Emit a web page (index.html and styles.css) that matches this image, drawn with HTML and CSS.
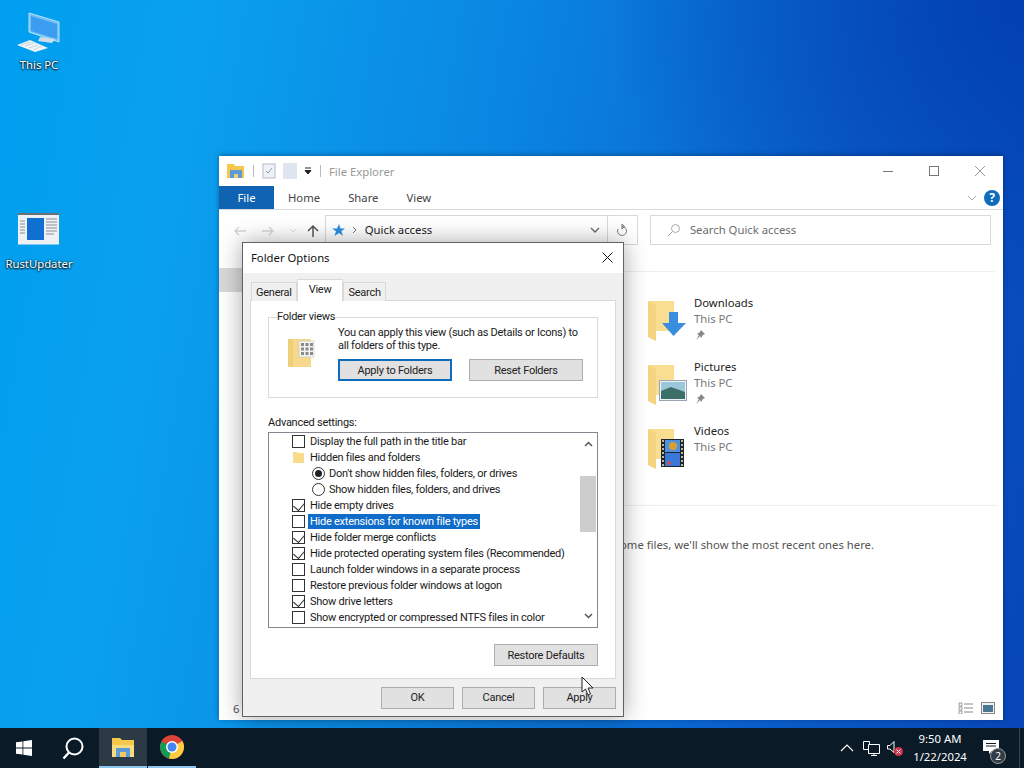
FILE: index.html
```html
<!DOCTYPE html>
<html lang="en">
<head>
  <meta charset="UTF-8" />
  <title>Folder Options</title>
  <link rel="stylesheet" href="styles.css">
</head>
<body>

<div class="desktop">

  <!-- desktop icons -->
  <div class="desk-icon icon-pc">
    <svg width="48" height="44" viewBox="0 0 48 44">
      <path d="M14 3 L44 12 V32 L14 22 Z" fill="#6fc0f4" stroke="#b9e0fa" stroke-width="1"/>
      <path d="M16 6 L42 14 V29 L16 21 Z" fill="#3a9df0"/>
      <path d="M25 27 L40 29 L37 33 L23 31 Z" fill="#cfdde8"/>
      <path d="M2 35 L15 30 L33 38 L20 42 Z" fill="#eef4f8"/>
      <path d="M6 35L15 32M10 36L19 33M14 38L23 35M18 40L27 36" stroke="#b8c6d2" stroke-width=".7"/>
    </svg>
    <span>This PC</span>
  </div>
  <div class="desk-icon icon-rust">
    <svg width="44" height="32" viewBox="0 0 44 32">
      <rect width="41" height="31" x="1" y="0.5" fill="#eef1f4"/>
      <rect x="1" y="0" width="41" height="2" fill="#6a6f78"/>
      <rect x="10" y="5" width="17" height="22" fill="#0f70d2"/>
      <path d="M3 8h5M3 11h5M3 14h5M3 17h5M3 20h5" stroke="#8a8f98" stroke-width="1"/>
      <path d="M29 6h11M29 9h11M29 12h11M29 15h11M29 18h11M29 21h8" stroke="#8a8f98" stroke-width="1"/>
    </svg>
    <span>RustUpdater</span>
  </div>

  <!-- explorer window -->
  <div class="explorer">
    <div class="ex-title">
      <svg width="18" height="16" viewBox="0 0 18 16">
        <path d="M0 1h7l1 2h9v12H0z" fill="#f5c84c"/>
        <path d="M3 7h12v8H3z" fill="#5a9bd8"/>
        <path d="M7 11h4v4H7z" fill="#f2d16a"/>
      </svg>
      <span class="sep"></span>
      <svg width="14" height="16" viewBox="0 0 14 16">
        <rect x="1" y="1" width="12" height="14" fill="#eef2f6" stroke="#b4bcc6"/>
        <path d="M4 8l2 2 4-5" stroke="#8aa0b8" fill="none"/>
      </svg>
      <svg class="ml" width="14" height="16" viewBox="0 0 14 16">
        <rect width="14" height="16" fill="#dfe6ef"/>
      </svg>
      <svg class="ml" width="8" height="8" viewBox="0 0 8 8">
        <path d="M1 1h6M1 3.500h6L4 7z" stroke="#222" stroke-width="1" fill="#222"/>
      </svg>
      <span class="sep"></span>
      <span class="ex-name">File Explorer</span>
      <div class="caption">
        <svg width="12" height="12" viewBox="0 0 12 12"><path d="M1 6.500h10" stroke="#777"/></svg>
        <svg width="12" height="12" viewBox="0 0 12 12"><rect x="1.500" y="1.500" width="9" height="9" fill="none" stroke="#777"/></svg>
        <svg width="12" height="12" viewBox="0 0 12 12"><path d="M1 1l10 10M11 1L1 11" stroke="#999"/></svg>
      </div>
    </div>

    <div class="ribbon">
      <div class="rib-file">File</div>
      <div class="rib-tab">Home</div>
      <div class="rib-tab">Share</div>
      <div class="rib-tab">View</div>
      <svg class="rib-chev" width="10" height="6" viewBox="0 0 10 6"><path d="M1 1l4 4 4-4" stroke="#aaa" fill="none"/></svg>
      <div class="help">?</div>
    </div>

    <div class="addr-row">
      <div class="nav-btns">
        <svg width="14" height="12" viewBox="0 0 14 12"><path d="M13 6H2M6 2L2 6l4 4" stroke="#d5d5d5" stroke-width="1.400" fill="none"/></svg>
        <svg width="14" height="12" viewBox="0 0 14 12"><path d="M1 6h11M8 2l4 4-4 4" stroke="#d5d5d5" stroke-width="1.400" fill="none"/></svg>
        <svg width="8" height="6" viewBox="0 0 8 6"><path d="M1 1l3 3 3-3" stroke="#ddd" fill="none"/></svg>
        <svg class="nav-up" width="14" height="14" viewBox="0 0 14 14"><path d="M7 13V2M2 7l5-5 5 5" stroke="#555" stroke-width="1.500" fill="none"/></svg>
      </div>
      <div class="addr-box">
        <svg width="14" height="13" viewBox="0 0 14 13"><path d="M8 0l1.500 4.500H14l-3.600 2.800L12 12 8 9 3.500 12 5 7.300 1 4.500h5z" fill="#2f8fe0"/></svg>
        <svg class="crumb" width="6" height="8" viewBox="0 0 6 8"><path d="M1 1l3 3-3 3" stroke="#777" fill="none"/></svg>
        <span class="addr-text">Quick access</span>
        <svg class="addr-down" width="10" height="6" viewBox="0 0 10 6"><path d="M1 1l4 4 4-4" stroke="#666" stroke-width="1.300" fill="none"/></svg>
      </div>
      <div class="refresh">
        <svg width="12" height="13" viewBox="0 0 12 13"><path d="M6 2.500a4.500 4.500 0 1 1-4 2.500M6 0v5l2.500-2.500z" stroke="#777" fill="none"/></svg>
      </div>
      <div class="search-box">
        <svg width="14" height="14" viewBox="0 0 14 14"><circle cx="8.500" cy="5.500" r="4" fill="none" stroke="#aaa"/><path d="M5.500 8.500L1 13" stroke="#aaa"/></svg>
        <span>Search Quick access</span>
      </div>
    </div>

    <div class="ex-body">
      <div class="ex-nav"><div class="nav-sel"></div></div>
      <div class="ex-main">
        <div class="section-head"></div>
        <div class="folders">
          <div class="folder">
            <div class="folder-icon">
              <svg width="44" height="44" viewBox="0 0 44 44">
                <path d="M0 2h26v30H8v8L0 36z" fill="#f9de92"/>
                <path d="M0 2l8 4v36L0 38z" fill="#f4d47f"/>
                <path d="M21 13h9v11h8L25.500 37 14 24h7z" fill="#3a8ee0"/>
              </svg>
            </div>
            <div class="folder-text">
              <div class="f-name">Downloads</div>
              <div class="f-sub">This PC</div>
              <svg class="pin" width="10" height="10" viewBox="0 0 10 10"><path d="M6 0l4 4-2 1-2 3-1-2-4 4 3-5-2-1 3-2z" fill="#888"/></svg>
            </div>
          </div>
          <div class="folder">
            <div class="folder-icon">
              <svg width="44" height="44" viewBox="0 0 44 44">
                <path d="M0 2h26v30H8v8L0 36z" fill="#f9de92"/>
                <path d="M0 2l8 4v36L0 38z" fill="#f4d47f"/>
                <rect x="11.500" y="17.500" width="27" height="20" fill="#eef3f8" stroke="#9aa4ae"/>
                <rect x="13" y="19" width="24" height="17" fill="#9cc7d8"/>
                <path d="M13 28l10-4 14 5v7H13z" fill="#3c6f6a"/>
              </svg>
            </div>
            <div class="folder-text">
              <div class="f-name">Pictures</div>
              <div class="f-sub">This PC</div>
              <svg class="pin" width="10" height="10" viewBox="0 0 10 10"><path d="M6 0l4 4-2 1-2 3-1-2-4 4 3-5-2-1 3-2z" fill="#888"/></svg>
            </div>
          </div>
          <div class="folder">
            <div class="folder-icon">
              <svg width="44" height="44" viewBox="0 0 44 44">
                <path d="M0 2h26v30H8v8L0 36z" fill="#f9de92"/>
                <path d="M0 2l8 4v36L0 38z" fill="#f4d47f"/>
                <rect x="13" y="12" width="23" height="28" fill="#1d2530"/>
                <rect x="17" y="13" width="15" height="12" fill="#5090e0"/>
                <rect x="17" y="26" width="15" height="13" fill="#3878d8"/>
                <circle cx="25" cy="19" r="4" fill="#d8a030"/>
                <circle cx="21" cy="36" r="2" fill="#d05050"/>
                <path d="M15 13v27M34 13v27" stroke="#c8b890" stroke-width="2" stroke-dasharray="2 2"/>
              </svg>
            </div>
            <div class="folder-text">
              <div class="f-name">Videos</div>
              <div class="f-sub">This PC</div>
            </div>
          </div>
        </div>
        <div class="recent-text">After you've opened some files, we'll show the most recent ones here.</div>
      </div>
    </div>

    <div class="ex-status">
      <span>6 items</span>
      <div class="view-btns">
        <svg width="16" height="12" viewBox="0 0 16 12"><path d="M1 1h3v3H1zM1 5h3v3H1zM1 9h3v3H1z" fill="none" stroke="#888" stroke-width=".8"/><path d="M6 2h9M6 6h9M6 10h9" stroke="#888"/></svg>
        <svg width="14" height="12" viewBox="0 0 14 12"><rect x=".5" y=".5" width="13" height="11" fill="#eef3f6" stroke="#888"/><rect x="2" y="3" width="10" height="7" fill="#4a7890"/></svg>
      </div>
    </div>
  </div>

  <!-- folder options dialog -->
  <div class="dialog">
    <div class="dlg-title">
      <span>Folder Options</span>
      <svg width="11" height="11" viewBox="0 0 11 11"><path d="M.5.500l10 10M10.500.500l-10 10" stroke="#111"/></svg>
    </div>
    <div class="dlg-body">
      <div class="tabs">
        <div class="tab">General</div>
        <div class="tab active">View</div>
        <div class="tab">Search</div>
      </div>
      <div class="panel">
        <fieldset class="views">
          <legend>Folder views</legend>
          <div class="views-row">
            <svg class="views-icon" width="30" height="30" viewBox="0 0 30 30">
              <path d="M0 1h23v28H0z" fill="#f6d98a"/>
              <path d="M0 1h5v28H0z" fill="#f0cf7a"/>
              <rect x="11" y="3" width="15" height="16" fill="#f2f2f0" stroke="#bbb" stroke-width=".5"/>
              <path d="M13 5h3v3h-3zM17.500 5h3v3h-3zM22 5h3v3h-3zM13 9.500h3v3h-3zM17.500 9.500h3v3h-3zM22 9.500h3v3h-3zM13 14h3v3h-3zM17.500 14h3v3h-3zM22 14h3v3h-3z" fill="#8a8a8a"/>
            </svg>
            <div class="views-right">
              <p class="views-text">You can apply this view (such as Details or Icons) to all folders of this type.</p>
              <div class="views-btns">
                <div class="btn btn-def">Apply to Folders</div>
                <div class="btn">Reset Folders</div>
              </div>
            </div>
          </div>
        </fieldset>

        <div class="adv-label">Advanced settings:</div>
        <div class="adv-list">
          <div class="adv-rows">
            <div class="row"><span class="cb"></span><span class="lbl">Display the full path in the title bar</span></div>
            <div class="row"><svg class="mini-folder" width="13" height="13" viewBox="0 0 13 13"><path d="M1 1h4l1 1h6v10H1z" fill="#f8dc8c"/></svg><span class="lbl">Hidden files and folders</span></div>
            <div class="row sub"><span class="rb on"></span><span class="lbl">Don't show hidden files, folders, or drives</span></div>
            <div class="row sub"><span class="rb"></span><span class="lbl">Show hidden files, folders, and drives</span></div>
            <div class="row"><span class="cb on"></span><span class="lbl">Hide empty drives</span></div>
            <div class="row"><span class="cb"></span><span class="lbl sel">Hide extensions for known file types</span></div>
            <div class="row"><span class="cb on"></span><span class="lbl">Hide folder merge conflicts</span></div>
            <div class="row"><span class="cb on"></span><span class="lbl">Hide protected operating system files (Recommended)</span></div>
            <div class="row"><span class="cb"></span><span class="lbl">Launch folder windows in a separate process</span></div>
            <div class="row"><span class="cb"></span><span class="lbl">Restore previous folder windows at logon</span></div>
            <div class="row"><span class="cb on"></span><span class="lbl">Show drive letters</span></div>
            <div class="row"><span class="cb"></span><span class="lbl">Show encrypted or compressed NTFS files in color</span></div>
          </div>
          <div class="scrollbar">
            <svg width="9" height="6" viewBox="0 0 9 6"><path d="M1 5l3.500-3.500L8 5" stroke="#555" stroke-width="1.500" fill="none"/></svg>
            <div class="track"><div class="thumb"></div></div>
            <svg width="9" height="6" viewBox="0 0 9 6"><path d="M1 1l3.500 3.500L8 1" stroke="#555" stroke-width="1.500" fill="none"/></svg>
          </div>
        </div>
        <div class="restore-row"><div class="btn btn-restore">Restore Defaults</div></div>
      </div>
      <div class="dlg-foot">
        <div class="btn btn-foot">OK</div>
        <div class="btn btn-foot">Cancel</div>
        <div class="btn btn-foot">Apply</div>
      </div>
    </div>
  </div>

  <svg class="cursor" width="14" height="20" viewBox="0 0 14 20">
    <path d="M1 1v15l3.500-3 2.500 6 2.500-1-2.500-6H12z" fill="#fff" stroke="#222"/>
  </svg>

  <!-- taskbar -->
  <div class="taskbar">
    <div class="tb-btn tb-start">
      <svg width="16" height="16" viewBox="0 0 16 16"><path d="M0 2.300l6.500-.9v6.200H0zM7.300 1.300L16 0v7.600H7.300zM0 8.400h6.500v6.200L0 13.700zM7.300 8.400H16V16l-8.700-1.200z" fill="#fff"/></svg>
    </div>
    <div class="tb-btn tb-search">
      <svg width="24" height="24" viewBox="0 0 24 24"><circle cx="12.500" cy="10.500" r="8" fill="none" stroke="#fff" stroke-width="2"/><path d="M7 16.500L1.500 22.500" stroke="#fff" stroke-width="2.400"/></svg>
    </div>
    <div class="tb-btn tb-app tb-active">
      <svg width="24" height="20" viewBox="0 0 24 20"><path d="M1 1h8l2 2h12v17H1z" fill="#f5c84c"/><path d="M1 8h22v12H1z" fill="#f8dc80"/><path d="M5 11h14v9H5z" fill="#5a9bd8"/><path d="M9 15h6v5H9z" fill="#f2c860"/></svg>
    </div>
    <div class="tb-btn tb-app tb-open">
      <svg width="24" height="24" viewBox="0 0 24 24">
        <circle cx="12" cy="12" r="12" fill="#db4437"/>
        <path d="M12 12L1.500 6.500A12 12 0 0 0 9 23.600z" fill="#0f9d58"/>
        <path d="M12 12l-3 11.600A12 12 0 0 0 24 12 12 12 0 0 0 22.500 6z" fill="#ffcd40"/>
        <circle cx="12" cy="12" r="6" fill="#fff"/>
        <circle cx="12" cy="12" r="4.500" fill="#4285f4"/>
      </svg>
    </div>
    <div class="tray">
      <svg class="tray-chev" width="14" height="8" viewBox="0 0 14 8"><path d="M1 7l6-6 6 6" stroke="#fff" stroke-width="1.200" fill="none"/></svg>
      <svg class="tray-net" width="17" height="15" viewBox="0 0 17 15"><path d="M5.500 3.500h11v9h-11zM.5.500h6v3M.5.500v8h5M8 14.500h6M11 12.500v2" stroke="#fff" fill="none"/></svg>
      <svg class="vol" width="18" height="16" viewBox="0 0 18 16">
        <path d="M.5 4.500h2.500l4-4v11l-4-3.500H.5z" stroke="#fff" fill="none"/>
        <circle cx="11.500" cy="10.500" r="4.500" fill="#d0324a"/>
        <path d="M9.500 8.500l4 4M13.500 8.500l-4 4" stroke="#fff"/>
      </svg>
      <div class="clock"><div>9:50 AM</div><div>1/22/2024</div></div>
      <div class="notif">
        <svg width="16" height="14" viewBox="0 0 16 14"><path d="M0 0h16v11h-7l-3 3v-3H0z" fill="#fff"/><path d="M3 3.500h10M3 6h10" stroke="#0c1c2c"/></svg>
        <span class="badge">2</span>
      </div>
      <div class="show-desktop"></div>
    </div>
  </div>
</div>

</body>
</html>
```

FILE: styles.css
```css
* {
  box-sizing: border-box;
}

body {
  margin: 0;
  font-family: "Noto Sans", sans-serif;
  font-size: 11.3px;
  color: #1a1a1a;
  overflow: hidden;
}

.desktop {
  position: relative;
  width: 1024px;
  height: 768px;
  overflow: hidden;
  background:
    radial-gradient(ellipse 420px 320px at 1024px 0, rgba(0, 60, 175, 0.8), transparent 100%),
    linear-gradient(100deg, #009ff0 0%, #0aa0ee 18%, #0a86e2 45%, #0a5fcb 75%, #0745b6 100%);
}

/* desktop icons */
.desk-icon {
  position: absolute;
  width: 76px;
  display: flex;
  flex-direction: column;
  align-items: center;
  color: #fff;
  text-shadow: 0 1px 2px #000, 0 0 2px #000;
}

.icon-pc {
  left: 1px;
  top: 10px;
}

.icon-pc span {
  margin-top: 3px;
}

.icon-rust {
  left: 1px;
  top: 213px;
}

.icon-rust span {
  margin-top: 11px;
}

/* explorer */
.explorer {
  position: absolute;
  left: 219px;
  top: 156px;
  width: 784px;
  height: 564px;
  background: #fff;
  box-shadow: 0 -1px 5px rgba(0, 20, 60, 0.4);
  display: flex;
  flex-direction: column;
}

.ex-title {
  height: 30px;
  display: flex;
  align-items: center;
  padding-left: 8px;
  color: #999;
}

.ex-title .ml {
  margin-left: 7px;
}

.sep {
  width: 1px;
  height: 12px;
  background: #bbb;
  margin: 0 8px;
}

.caption {
  margin-left: auto;
  display: flex;
  gap: 34px;
  padding-right: 17px;
}

.ribbon {
  height: 24px;
  display: flex;
  align-items: center;
  border-bottom: 1px solid #dadbdc;
  color: #444;
}

.rib-file {
  width: 55px;
  height: 23px;
  background: #0f63b2;
  color: #fff;
  display: flex;
  align-items: center;
  justify-content: center;
}

.rib-tab {
  padding: 0 14px;
}

.rib-chev {
  margin-left: auto;
}

.help {
  width: 16px;
  height: 16px;
  margin: 0 3px 0 7px;
  border-radius: 50%;
  background: #0f6cbd;
  color: #fff;
  font-weight: 700;
  font-size: 12px;
  line-height: 16px;
  text-align: center;
}

.addr-row {
  height: 40px;
  display: flex;
  align-items: center;
  padding: 0 12px 0 14px;
}

.nav-btns {
  width: 92px;
  display: flex;
  align-items: center;
  gap: 14px;
  padding-top: 2px;
}

.nav-up {
  margin-left: -5px;
}

.addr-box {
  width: 284px;
  height: 30px;
  border: 1px solid #d9d9d9;
  display: flex;
  align-items: center;
  padding: 0 7px 0 5px;
  color: #222;
}

.addr-text,
.search-box span {
  margin-top: -1px;
}

.crumb {
  margin: 0 7px;
}

.addr-down {
  margin-left: auto;
}

.refresh {
  width: 30px;
  height: 30px;
  border: 1px solid #d9d9d9;
  border-left: none;
  display: flex;
  align-items: center;
  justify-content: center;
}

.search-box {
  width: 342px;
  height: 30px;
  margin-left: 12px;
  border: 1px solid #d9d9d9;
  display: flex;
  align-items: center;
  gap: 9px;
  padding-left: 16px;
  color: #6d6d6d;
}

.ex-body {
  flex: 1;
  display: flex;
  min-height: 0;
}

.ex-nav {
  width: 180px;
  padding-top: 18px;
}

.nav-sel {
  height: 24px;
  background: #d9d9d9;
}

.ex-main {
  flex: 1;
  padding-left: 249px;
}

.section-head {
  height: 22px;
  margin-left: -249px;
  margin-right: 8px;
  border-bottom: 1px solid #eee;
}

.folders {
  padding-top: 22px;
  height: 234px;
  border-bottom: 1px solid #eee;
  margin-right: 6px;
  margin-left: -249px;
  padding-left: 249px;
}

.folder {
  display: flex;
  height: 64px;
  gap: 2px;
}

.folder-icon {
  width: 44px;
  padding-top: 5px;
}

.f-name {
  color: #222;
  line-height: 16px;
  margin-top: 1px;
}

.f-sub {
  color: #777;
  line-height: 16px;
}

.pin {
  display: block;
  margin-top: 3px;
  margin-left: 1px;
}

.recent-text {
  padding: 31px 129px 0 0;
  margin-left: -249px;
  text-align: right;
  color: #555;
  white-space: nowrap;
}

.ex-status {
  height: 22px;
  display: flex;
  align-items: center;
  justify-content: space-between;
  padding: 0 8px 2px 14px;
  color: #555;
}

.view-btns {
  display: flex;
  gap: 7px;
}

/* dialog */
.dialog {
  position: absolute;
  left: 242px;
  top: 242px;
  width: 382px;
  height: 475px;
  background: #f0f0f0;
  border: 1px solid #5f6266;
  box-shadow: 0 0 22px rgba(0, 0, 0, 0.35);
  display: flex;
  flex-direction: column;
}

.dlg-title {
  height: 30px;
  background: #fff;
  display: flex;
  align-items: center;
  justify-content: space-between;
  padding: 0 10px 2px 8px;
  color: #111;
  flex-shrink: 0;
}

.dlg-body {
  flex: 1;
  display: flex;
  flex-direction: column;
  padding: 7px 7px 0 7px;
  min-height: 0;
  font-family: Roboto, sans-serif;
  font-size: 11px;
  letter-spacing: -0.25px;
}

.tabs {
  display: flex;
  height: 21px;
  padding-left: 1px;
  align-items: flex-end;
  position: relative;
  z-index: 1;
  margin-bottom: -1px;
}

.tab {
  height: 19px;
  line-height: 19px;
  padding: 0 4px;
  background: #f0f0f0;
  border: 1px solid #d9d9d9;
  border-bottom: none;
  margin-right: -1px;
  color: #222;
}

.tab.active {
  height: 22px;
  background: #fff;
  padding: 0 11px;
  line-height: 19px;
  position: relative;
  z-index: 2;
  margin: 0 0 0 1px;
}

.panel {
  height: 379px;
  background: #fff;
  border: 1px solid #d9d9d9;
  padding: 9px 17px 0 17px;
}

.views {
  margin: 0;
  height: 88px;
  padding: 0;
  border: 1px solid #d9d9d9;
  min-width: 0;
}

.views legend {
  margin-left: 8px;
  padding: 0;
  line-height: 14px;
}

.views-row {
  display: flex;
  padding-left: 19px;
}

.views-icon {
  margin-top: 14px;
  flex-shrink: 0;
}

.views-right {
  margin-left: 20px;
}

.views-text {
  margin: 2px 0 0 0;
  width: 250px;
  line-height: 13px;
}

.views-btns {
  display: flex;
  gap: 17px;
  margin-top: 7px;
}

.btn {
  background: #e1e1e1;
  border: 1px solid #adadad;
  display: flex;
  align-items: center;
  justify-content: center;
  color: #222;
  width: 114px;
  height: 22px;
}

.btn-def {
  border: 2px solid #0f6cbd;
}

.adv-label {
  margin-top: 17px;
  line-height: 16px;
}

.adv-list {
  height: 196px;
  margin-top: 1px;
  border: 1px solid #828790;
  display: flex;
  background: #fff;
}

.adv-rows {
  flex: 1;
  padding: 0 0 0 23px;
  min-width: 0;
}

.row {
  height: 16px;
  display: flex;
  align-items: center;
  white-space: nowrap;
}

.row.sub {
  padding-left: 20px;
}

.cb {
  width: 13px;
  height: 13px;
  border: 1px solid #333;
  margin-right: 3px;
  flex-shrink: 0;
  position: relative;
}

.cb.on::after {
  content: "";
  position: absolute;
  left: 2px;
  top: 0;
  width: 7px;
  height: 9px;
  transform: rotate(40deg) scaleX(0.9);
  transform-origin: center;
  border-right: 1px solid #222;
  border-bottom: 1px solid #222;
}

.rb {
  width: 13px;
  height: 13px;
  border: 1px solid #333;
  border-radius: 50%;
  margin-right: 2px;
  flex-shrink: 0;
  position: relative;
}

.rb.on::after {
  content: "";
  position: absolute;
  left: 2px;
  top: 2px;
  width: 7px;
  height: 7px;
  border-radius: 50%;
  background: #222;
}

.mini-folder {
  margin-right: 3px;
  flex-shrink: 0;
}

.lbl {
  padding: 0 2px;
  line-height: 15px;
}

.lbl.sel {
  background: #0f6cc8;
  color: #fff;
}

.scrollbar {
  width: 18px;
  display: flex;
  flex-direction: column;
  align-items: center;
  padding: 8px 0;
}

.track {
  flex: 1;
  width: 100%;
  margin-top: 29px;
}

.thumb {
  width: 16px;
  margin: 0 auto;
  height: 56px;
  background: #cdcdcd;
}

.restore-row {
  display: flex;
  justify-content: flex-end;
  margin-top: 16px;
}

.btn-restore {
  width: 104px;
}

.dlg-foot {
  flex: 1;
  display: flex;
  justify-content: flex-end;
  align-items: center;
  gap: 8px;
}

.btn-foot {
  width: 73px;
}

.cursor {
  position: absolute;
  left: 581px;
  top: 676px;
}

/* taskbar */
.taskbar {
  position: absolute;
  left: 0;
  bottom: 0;
  width: 1024px;
  height: 40px;
  background: #0b1a27;
  display: flex;
  color: #fff;
}

.tb-btn {
  display: flex;
  align-items: center;
  justify-content: center;
  height: 40px;
}

.tb-start {
  width: 48px;
}

.tb-search {
  width: 51px;
}

.tb-app {
  width: 48px;
  border-bottom: 2px solid transparent;
}

.tb-active {
  background: #2c3a46;
  border-bottom-color: #8dc4ee;
}

.tb-open {
  margin-left: 1px;
  border-bottom-color: #8dc4ee;
}

.tray {
  margin-left: auto;
  display: flex;
  align-items: center;
}

.tray-chev {
  margin-right: 9px;
}

.tray-net {
  margin-right: 7px;
}

.vol {
  margin-top: 2px;
}

.clock {
  width: 70px;
  margin-right: 2px;
  text-align: center;
  line-height: 18px;
}

.notif {
  position: relative;
  margin: 0 16px 0 6px;
  width: 20px;
  height: 20px;
  padding-top: 2px;
}

.badge {
  position: absolute;
  left: 7px;
  top: 10px;
  width: 16px;
  height: 16px;
  border-radius: 50%;
  background: #333d47;
  border: 1px solid #999;
  font-size: 10px;
  line-height: 14px;
  text-align: center;
}

.show-desktop {
  width: 5px;
  height: 40px;
  border-left: 1px solid #3a4650;
}
```
